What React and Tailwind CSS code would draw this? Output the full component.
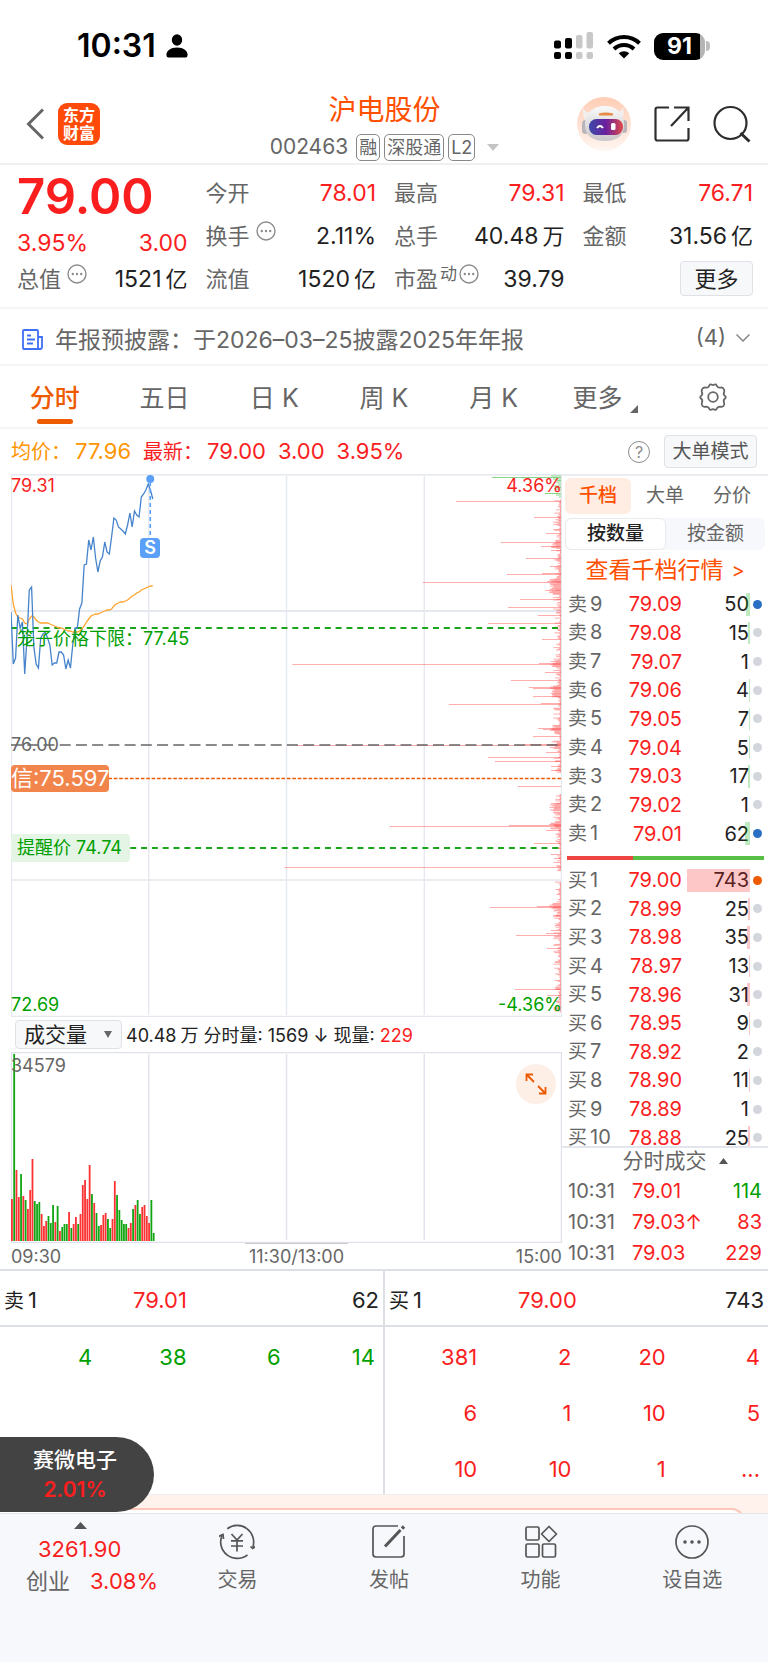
import { useState } from 'react'
import clsx from 'clsx'

const sells = [
  { name: '9', price: '79.09', qty: 50, bar: 4, dot: 'bg-[#2b6fc4]' },
  { name: '8', price: '79.08', qty: 15, bar: 2 },
  { name: '7', price: '79.07', qty: 1, bar: 0 },
  { name: '6', price: '79.06', qty: 4, bar: 1 },
  { name: '5', price: '79.05', qty: 7, bar: 1 },
  { name: '4', price: '79.04', qty: 5, bar: 1 },
  { name: '3', price: '79.03', qty: 17, bar: 2 },
  { name: '2', price: '79.02', qty: 1, bar: 0 },
  { name: '1', price: '79.01', qty: 62, bar: 5, dot: 'bg-[#2b6fc4]' },
]

const buys = [
  { name: '1', price: '79.00', qty: 743, bar: 63, dot: 'bg-[#ee5a00]' },
  { name: '2', price: '78.99', qty: 25, bar: 2 },
  { name: '3', price: '78.98', qty: 35, bar: 3 },
  { name: '4', price: '78.97', qty: 13, bar: 1 },
  { name: '5', price: '78.96', qty: 31, bar: 3 },
  { name: '6', price: '78.95', qty: 9, bar: 1 },
  { name: '7', price: '78.92', qty: 2, bar: 0 },
  { name: '8', price: '78.90', qty: 11, bar: 1 },
  { name: '9', price: '78.89', qty: 1, bar: 0 },
  { name: '10', price: '78.88', qty: 25, bar: 2 },
]

const deals = [
  { time: '10:31', price: '79.01', up: false, qty: 114, color: 'text-[#009f00]' },
  { time: '10:31', price: '79.03', up: true, qty: 83, color: 'text-[#fa1e1e]' },
  { time: '10:31', price: '79.03', up: false, qty: 229, color: 'text-[#fa1e1e]' },
]

// one value per minute, measured down from the top of the chart
const prices = [
  138, 190, 184, 141, 154, 148, 200, 164, 116, 113, 173, 190, 194, 164, 160, 158, 164, 171, 191, 189, 189,
  178, 178, 181, 195, 186, 194, 171, 154, 154, 135, 129, 91, 90, 66, 76, 63, 84, 98, 87, 83, 68,
  78, 80, 63, 44, 46, 53, 55, 57, 60, 51, 39, 53, 37, 41, 43, 23, 20, 16, 10, 16, 25,
]

const averages = [
  111, 130, 139, 143, 144, 145, 149, 150, 145, 142, 143, 146, 148, 149, 149, 149, 149, 150, 151, 152, 153,
  154, 154, 155, 156, 157, 157, 158, 158, 158, 157, 155, 152, 148, 145, 142, 141, 140, 140, 139, 138, 137,
  136, 136, 135, 132, 130, 129, 128, 128, 127, 126, 124, 122, 121, 119, 118, 116, 115, 114, 113, 112, 112,
]

const volumes =
  'r42 g187 r71 r44 g67 r45 g41 r32 r51 r82 g40 g37 g39 r27 r15 r20 g25 g18 g36 r19 g35 r10 g14 g17 g17 r29 g13 r17 r24 g17 r27 r56 r61 r42 r76 g47 r38 g28 g15 r16 r26 r28 g22 g13 r22 r60 g46 g31 g21 g17 g17 r13 r18 g32 r36 g41 g27 r34 r36 r25 r18 g41 g8'.split(' ')

// [y, length] of the big resting orders
const orders = [
  [28, 105], [44, 27], [60, 15], [69, 60], [73, 20], [77, 10], [85, 35], [93, 11], [101, 54], [100, 19], [109, 138],
  [108, 14], [117, 16], [126, 41], [134, 53], [142, 23], [150, 73], [166, 19], [191, 268], [190, 22], [199, 16],
  [207, 50], [214, 32], [215, 28], [223, 28], [231, 112], [230, 20], [255, 23], [256, 18], [263, 28], [272, 265],
  [271, 36], [279, 15], [284, 73], [288, 66], [293, 10], [297, 10], [313, 43], [330, 10], [353, 171],
  [352, 52], [351, 12], [357, 15], [370, 27], [381, 10], [385, 7], [394, 276], [434, 71], [433, 24], [442, 8],
  [457, 10], [460, 15], [462, 45], [475, 14], [516, 46], [522, 14],
]

const STEP = 550 / 241
const toPoints = (list) => list.map((y, i) => `${i * STEP},${y}`).join(' ')

// short bars between the big ones, denser around the busy prices
const busyPrices = [70, 109, 117, 190, 215, 219, 255, 271, 333, 351, 433]
const smallOrders = Array.from({ length: 625 }, (_, i) => {
  const y = 26 + i * 0.82
  const noise = Math.abs(Math.sin(i * 12.9898) * 43758.5453) % 1
  const busy = busyPrices.some((b) => Math.abs(b - y) < 4)
  return [y, busy ? 4 + noise * 8 : 1 + noise * noise * noise * 7]
}).filter(([y]) => !(y > 299 && y < 320) && !(y > 397 && y < 408))

function MoreDots() {
  return (
    <svg viewBox="0 0 20 20" className="size-5 shrink-0 text-[#8c8c8c]" fill="none" stroke="currentColor">
      <circle cx="10" cy="10" r="9" strokeWidth="1.4" />
      <g fill="currentColor" stroke="none">
        <circle cx="5.8" cy="10" r="1.2" />
        <circle cx="10" cy="10" r="1.2" />
        <circle cx="14.2" cy="10" r="1.2" />
      </g>
    </svg>
  )
}

function StatusBar() {
  return (
    <div className="flex h-[90px] items-center justify-between pt-0.5 pr-[58px] pl-[77px] text-black">
      <div className="flex items-center gap-2.5">
        <span className="text-[32px] leading-9 font-semibold">10:31</span>
        <svg viewBox="0 0 22 24" className="h-6 w-[22px]" fill="currentColor">
          <ellipse cx="11" cy="6" rx="5.2" ry="5.8" />
          <path d="M.4 21C.4 17 4.500 13.600 11 13.600S21.600 17 21.600 21Q21.600 23.500 19.500 23.500H2.500Q.4 23.500 .4 21Z" />
        </svg>
      </div>
      <div className="flex items-center">
        <svg viewBox="0 0 40 28" className="mr-3 h-7 w-10">
          <rect x="0" y="8.500" width="7" height="8" rx="2" />
          <rect x="11" y="6" width="7" height="10.500" rx="2" />
          <g fill="#c8c8c8">
            <rect x="22" y="3" width="6.500" height="13.500" rx="2" />
            <rect x="32.500" y="0" width="6.500" height="16.500" rx="2" />
            <rect x="22" y="20" width="6.500" height="7" rx="2" />
            <rect x="32.500" y="20" width="6.500" height="7" rx="2" />
          </g>
          <rect x="0" y="20" width="7" height="7" rx="2" />
          <rect x="11" y="20" width="7" height="7" rx="2" />
        </svg>
        <svg viewBox="0 0 36 26" className="mr-3 h-[26px] w-9" fill="none" stroke="currentColor" strokeWidth="4">
          <path d="M2.500 10.200A22.500 22.500 0 0 1 33.500 10.200" />
          <path d="M8 16A14.500 14.500 0 0 1 28 16" />
          <path d="M18 25.500L12.700 20.300A7.600 7.600 0 0 1 23.300 20.300Z" fill="currentColor" stroke="none" />
        </svg>
        <div className="flex items-center gap-px">
          <div className="flex h-[27px] w-[51px] justify-center rounded-[9px] bg-linear-to-r from-black from-90% to-[#b5b5b5] to-90% text-[23px] leading-[27px] font-bold text-white">
            91
          </div>
          <div className="h-2.5 w-1 rounded-r-full bg-[#bdbdbd]" />
        </div>
      </div>
    </div>
  )
}

function Robot() {
  return (
    <svg viewBox="0 0 54 54" className="size-[54px]">
      <defs>
        <linearGradient id="halo" x1="0" y1="0" x2="0" y2="1">
          <stop offset="0" stopColor="#ffcdb5" />
          <stop offset="1" stopColor="#fff6f1" />
        </linearGradient>
        <linearGradient id="shell" x1="0" y1="0" x2="0" y2="1">
          <stop offset="0" stopColor="#fafafa" />
          <stop offset="1" stopColor="#c9c5c8" />
        </linearGradient>
        <linearGradient id="visor" x1="0" y1="0" x2="1" y2="0">
          <stop offset="0" stopColor="#3b4aa8" />
          <stop offset=".5" stopColor="#6a1f9e" />
          <stop offset="1" stopColor="#e04a4a" />
        </linearGradient>
      </defs>
      <circle cx="27" cy="27" r="27" fill="url(#halo)" />
      <path d="M6 11q2 5 7 4l3 4-7 5q-4-6-3-13ZM46 10q-1 5-6 5l-2 4 6 5q4-6 2-14Z" fill="#f3efef" />
      <rect x="5" y="23" width="7" height="14" rx="3.500" fill="#b9b4ba" />
      <rect x="44" y="23" width="6" height="13" rx="3" fill="#b9b4ba" />
      <path d="M28 9C14 9 8 18 8 28c0 11 8 16 20 16s19-5 19-16C47 18 41 9 28 9Z" fill="url(#shell)" />
      <path d="M22 16.500q6-1.800 14 0v2H22Z" fill="#e88a45" />
      <rect x="12" y="22" width="34" height="16" rx="7.500" fill="url(#visor)" />
      <path d="M20 31q3-4 6 0" fill="none" stroke="#fff" strokeWidth="1.800" />
      <rect x="34" y="26" width="4.500" height="7" rx="1.500" fill="#fff" />
    </svg>
  )
}

function Header() {
  return (
    <header className="flex h-[75px] items-center justify-between border-b-2 border-[#f0f0f0] pr-[17px] pb-1.5 pl-[26px]">
      <div className="flex w-[168px] items-center gap-3.5">
        <button aria-label="返回">
          <svg viewBox="0 0 18 32" className="h-8 w-[18px]" fill="none" stroke="#666" strokeWidth="3">
            <path d="M17 1.500L2.500 16L17 30.500" />
          </svg>
        </button>
        <a
          href="#"
          className="flex size-[42px] flex-col items-center justify-center rounded-[9px] bg-[#ff4a0a] text-[16px] leading-[18px] font-bold text-white"
        >
          <span>东方</span>
          <span>财富</span>
        </a>
      </div>
      <div className="flex flex-col items-center gap-2 pt-[7px]">
        <h1 className="text-[28px] leading-8 text-[#ff5000]">沪电股份</h1>
        <div className="flex h-[27px] items-center gap-1 text-[18px] text-[#666]">
          <span className="mr-1 text-[21px]">002463</span>
          <span className="flex h-[27px] items-center rounded-[5px] border border-[#888] px-0.5">融</span>
          <span className="flex h-[27px] items-center rounded-[5px] border border-[#888] px-0.5">深股通</span>
          <span className="flex h-[27px] items-center rounded-[5px] border border-[#888] px-0.5">L2</span>
          <svg viewBox="0 0 12 7" className="ml-2 h-[7px] w-3" fill="#c4c4c4">
            <path d="M0 0H12L6 7Z" />
          </svg>
        </div>
      </div>
      <div className="flex w-[176px] items-center justify-end gap-[23px]">
        <Robot />
        <button aria-label="分享">
          <svg viewBox="0 0 36 36" className="size-9" fill="none" stroke="#2e2e2e" strokeWidth="2.200">
            <path d="M15 1.500H3.500Q1.500 1.500 1.500 3.500V32.500Q1.500 34.500 3.500 34.500H32.500Q34.500 34.500 34.500 32.500V22" />
            <path d="M20 1.500H34.500V15M34.500 1.500L17 20" />
          </svg>
        </button>
        <button aria-label="搜索">
          <svg viewBox="0 0 38 38" className="size-[38px]" fill="none" stroke="#2e2e2e" strokeWidth="2.200">
            <circle cx="17.500" cy="18" r="16" />
            <path d="M27.500 28L36.500 36.500" strokeWidth="3" />
          </svg>
        </button>
      </div>
    </header>
  )
}

function Stat({ label, value, unit, red, dots, sup }) {
  return (
    <div className="flex h-[43px] items-center justify-between">
      <dt className="flex items-center text-[22px] text-[#666]">
        {label}
        {sup && <sup className="top-0 mb-2.5 ml-0.5 text-[17px]">{sup}</sup>}
        {dots && <span className={clsx('mb-2.5', sup ? 'ml-0.5' : 'ml-1.5')}><MoreDots /></span>}
      </dt>
      <dd className={red ? 'text-[#fa1e1e]' : 'text-[#222]'}>
        {value}
        {unit && <span className="ml-1 text-[22px]">{unit}</span>}
      </dd>
    </div>
  )
}

function Quote() {
  return (
    <section className="grid h-36 grid-cols-4 gap-x-[18px] border-b-2 border-[#f5f5f5] pt-1.5 pr-[15px] pl-[17px] text-[23px] leading-7">
      <dl>
        <div className="h-[51px] text-[49px] leading-[51px] font-semibold text-[#fa1e1e]">79.00</div>
        <div className="flex h-[35px] items-end justify-between text-[#fa1e1e]">
          <span>3.95%</span>
          <span>3.00</span>
        </div>
        <Stat label="总值" value="1521" unit="亿" dots />
      </dl>
      <dl>
        <Stat label="今开" value="78.01" red />
        <Stat label="换手" value="2.11%" dots />
        <Stat label="流值" value="1520" unit="亿" />
      </dl>
      <dl>
        <Stat label="最高" value="79.31" red />
        <Stat label="总手" value="40.48" unit="万" />
        <Stat label="市盈" sup="动" value="39.79" dots />
      </dl>
      <div>
        <dl>
          <Stat label="最低" value="76.71" red />
          <Stat label="金额" value="31.56" unit="亿" />
        </dl>
        <div className="flex h-[43px] items-center justify-end">
          <button className="h-[35px] w-[73px] rounded-[4px] border border-[#dfe1e6] bg-[#f7f8fa] text-[22px] text-[#222]">
            更多
          </button>
        </div>
      </div>
    </section>
  )
}

function Notice() {
  return (
    <div className="flex h-[57px] items-center border-b-2 border-[#f5f5f5] pt-1.5 pr-[18px] pl-[22px] text-[23px] text-[#666]">
      <svg viewBox="0 0 21 21" className="mr-3 size-[21px]" fill="none" stroke="#3f6ff5" strokeWidth="1.800">
        <path d="M1 2Q1 1 2 1H15Q16 1 16 2V20H2Q1 20 1 19Z" />
        <path d="M16 8H20V18Q20 20 18 20H15M5 6.500H9M5 10.500H13M5 14.500H11" />
      </svg>
      <span className="flex-1 truncate pt-0.5">年报预披露：于2026–03–25披露2025年年报</span>
      <button className="flex items-center gap-2.5 pb-1 text-[22px]">
        (4)
        <svg viewBox="0 0 14 8" className="h-2 w-3.5" fill="none" stroke="#888" strokeWidth="1.500">
          <path d="M.5 .5L7 7L13.500 .5" />
        </svg>
      </button>
    </div>
  )
}

function PeriodTabs() {
  const [active, setActive] = useState('分时')
  const periods = ['分时', '五日', '日 K', '周 K', '月 K']

  return (
    <nav className="grid h-[63px] grid-cols-7 border-b-2 border-[#f5f5f5] text-[25px] text-[#666]">
      {periods.map((p) => (
        <button
          key={p}
          onClick={() => setActive(p)}
          className={clsx('relative pt-1', active === p && 'font-medium text-[#ee5a00]')}
        >
          {p}
          {active === p && (
            <span className="absolute bottom-[3px] left-1/2 h-[5px] w-9 -translate-x-1/2 rounded-full bg-[#ee5a00]" />
          )}
        </button>
      ))}
      <button className="flex items-center justify-center gap-2 pt-1 pl-1">
        更多
        <svg viewBox="0 0 8 8" className="mt-5 size-2" fill="#666">
          <path d="M8 0V8H0Z" />
        </svg>
      </button>
      <button aria-label="设置" className="flex items-center justify-center">
        <svg viewBox="0 0 30 30" className="size-[30px]" fill="none" stroke="#666" strokeWidth="1.800">
          <path
            d="M11.500 3.200Q12 1.800 13.500 2.600Q15 3.600 16.500 2.600Q18 1.800 18.500 3.200Q19.500 6 22.500 5.600Q25 5 26 7.500Q26.800 9 26 10.500Q25 12.500 27 14Q28.500 15 27 16.500Q25 18 26 20.500Q27 22.500 25.500 24Q24.500 25.200 22.500 24.600Q19.500 24.500 18.500 27Q18 28.500 16.500 27.600Q15 26.800 13.500 27.600Q12 28.500 11.500 27Q10.500 24.500 7.500 24.600Q5.500 25.200 4.500 24Q3 22.500 4 20.500Q5 18 3 16.500Q1.500 15 3 14Q5 12.500 4 10.500Q3.200 9 4 7.500Q5 5 7.500 5.600Q10.500 6 11.500 3.200Z"
            strokeLinejoin="round"
          />
          <circle cx="15" cy="15" r="4.800" />
        </svg>
      </button>
    </nav>
  )
}

function InfoBar() {
  return (
    <div className="flex h-[45px] items-center pr-[11px] pl-[11px] text-[22px] text-[#fa1e1e]">
      <span className="mr-3 flex items-center text-[#ff9500]">
        <span className="mr-1 text-[20px]">均价：</span>77.96
      </span>
      <span className="mr-3 flex items-center">
        <span className="mr-1 text-[20px]">最新：</span>79.00
      </span>
      <span className="mr-3">3.00</span>
      <span>3.95%</span>
      <button aria-label="说明" className="mr-3.5 ml-auto flex size-[22px] items-center justify-center rounded-full border border-[#8c8c8c] text-[16px] leading-none text-[#8c8c8c]">
        ?
      </button>
      <button className="h-[33px] w-[93px] rounded-[4px] border border-[#dfe1e6] bg-[#f7f8fa] text-[19px] leading-7 text-[#555]">
        大单模式
      </button>
    </div>
  )
}

function PriceChart() {
  return (
    <div className="relative h-[543px] text-[18px] leading-5">
      <svg viewBox="0 0 550 543" preserveAspectRatio="none" className="size-full">
        <g stroke="#e6e8f0" strokeWidth="1.400">
          <path d="M0 .7H550M0 542.500H550M.5 0V543M137.500 2V541M275 2V541M412.500 2V541M549.500 0V543M0 406H550" />
          <path d="M0 137H550" strokeWidth="2" />
        </g>
        <g stroke="#ff3b3b" strokeOpacity=".42" strokeWidth="1">
          {orders.map(([y, len]) => (
            <path key={`${y}-${len}`} d={`M${549 - len} ${y - 0.5}H549`} />
          ))}
          {smallOrders.map(([y, len]) => (
            <path key={y} d={`M${549 - len} ${y}H549`} />
          ))}
        </g>
        <g stroke="#39b939" strokeOpacity=".6" strokeWidth="1.200">
          <path d="M480 3.500H549M539 2H549M541 5H549M545 6.500H549M543 8H549M546 10H549M541 12H549M544 13.500H549M542 15H549M546 17H549M533 19.500H549M544 21H549M547 23H549" />
        </g>
        <g strokeWidth="2" fill="none">
          <path d="M0 154H549" stroke="#1ba51b" strokeDasharray="6 4.800" />
          <path d="M0 271H549" stroke="#666" strokeWidth="1.500" strokeDasharray="11 5.200" />
          <path d="M0 304.500H549" stroke="#ee5a00" strokeWidth="1.500" strokeDasharray="3.600 1.800" />
          <path d="M119 374H549" stroke="#1ba51b" strokeDasharray="6 4.800" />
        </g>
        <polyline points={toPoints(averages)} fill="none" stroke="#ffa42e" strokeWidth="1.300" />
        <polyline points={toPoints(prices)} fill="none" stroke="#4583cb" strokeWidth="1.300" />
        <path d="M139 8V64" stroke="#5a9ff8" strokeWidth="1.600" strokeDasharray="4 3" />
        <circle cx="139" cy="5" r="4" fill="#5a9ff8" />
      </svg>
      <span className="absolute top-0.5 left-0 text-[#fa1e1e]">79.31</span>
      <span className="absolute top-0.5 right-0 text-[#fa1e1e]">4.36%</span>
      <span className="absolute top-16 left-[129px] size-5 rounded-[4px] bg-[#5a9ff8] text-center font-semibold text-white">
        S
      </span>
      <span className="absolute top-[155px] left-1.5 text-[#009f00]">笼子价格下限：77.45</span>
      <span className="absolute top-[261px] left-0 text-[#666]">76.00</span>
      <span className="absolute top-[291px] left-0 rounded-[4px] bg-[#f2854c] text-[22px] leading-[27px] text-white">
        信:75.597
      </span>
      <span className="absolute top-[360px] left-0 rounded-r-[4px] bg-[#e5f5e5] pr-2 pl-1.5 leading-7 text-[#009f00]">
        提醒价 74.74
      </span>
      <span className="absolute bottom-0.5 left-0 text-[#009f00]">72.69</span>
      <span className="absolute right-0 bottom-0.5 text-[#009f00]">-4.36%</span>
    </div>
  )
}

function VolumeChart() {
  return (
    <>
      <div className="flex h-[35px] items-center gap-1 pl-1 text-[18px] text-[#222]">
        <div className="relative">
          <select
            aria-label="指标"
            className="h-[29px] w-[107px] appearance-none rounded-[4px] border border-[#dfe1e6] bg-[#f7f8fa] pl-2 text-[21px] leading-6"
          >
            <option>成交量</option>
          </select>
          <svg viewBox="0 0 8 7" className="pointer-events-none absolute top-[11px] right-2.5 h-[7px] w-2" fill="#666">
            <path d="M0 0H8L4 7Z" />
          </svg>
        </div>
        <span className="pt-0.5 whitespace-nowrap">
          40.48<span className="ml-1">万</span> 分时量: 1569 ↓ 现量: <span className="text-[#fa1e1e]">229</span>
        </span>
      </div>
      <div className="relative h-[191px]">
        <svg viewBox="0 0 550 191" preserveAspectRatio="none" className="size-full">
          <path d="M0 .5H550M0 190.500H550M.5 0V191M137.500 2V188M275 2V188M412.500 2V188M549.500 0V191" stroke="#dfe2ea" strokeWidth="1.400" />
          {volumes.map((v, i) => {
            const h = Number(v.slice(1))
            return (
              <rect
                key={i}
                x={i * STEP}
                y={189 - h}
                width="1.800"
                height={h}
                fill={v[0] === 'r' ? '#fa3232' : '#12a512'}
              />
            )
          })}
        </svg>
        <span className="absolute top-1 left-0 text-[18px] leading-5 text-[#666]">34579</span>
        <button
          aria-label="全屏"
          className="absolute top-3 right-1.5 flex size-10 items-center justify-center rounded-full bg-[#fdeee6]"
        >
          <svg viewBox="0 0 22 22" className="size-[22px]" fill="none" stroke="#ee5a00" strokeWidth="1.800">
            <path d="M1.500 8V1.500H8M1.500 1.500L9 9M20.500 14V20.500H14M20.500 20.500L13 13" />
          </svg>
        </button>
      </div>
      <div className="flex h-[26px] justify-between text-[18px] leading-[26px] text-[#666]">
        <span className="pt-px">09:30</span>
        <span className="ml-4 border-t border-[#c9c9c9] px-1">11:30/13:00</span>
        <span className="pt-px">15:00</span>
      </div>
    </>
  )
}

function BookTable({ side, rows, barColor, className }) {
  return (
    <table className={clsx('w-full table-fixed text-[20px] leading-4', className)}>
      <tbody>
        {rows.map((row) => (
          <tr key={row.name}>
            <th scope="row" className="w-[51px] p-0 pl-1.5 text-left font-normal whitespace-nowrap text-[#666]">
              <span className="text-[19px]">{side}</span>
              <span className="ml-[3px]">{row.name}</span>
            </th>
            <td className="w-[69px] p-0 text-right text-[#fa1e1e]">{row.price}</td>
            <td className="relative p-0 pr-px text-right text-[#222]">
              {row.qty}
              <span className={clsx('absolute inset-y-[3px] right-0', barColor)} style={{ width: row.bar }} />
            </td>
            <td className="w-[18px] p-0 pl-[3px]">
              <span className={clsx('block size-[9px] rounded-full', row.dot || 'bg-[#d3d6dd]')} />
            </td>
          </tr>
        ))}
      </tbody>
    </table>
  )
}

function OrderBook() {
  const [tab, setTab] = useState('千档')
  const [mode, setMode] = useState('按数量')

  return (
    <aside className="flex w-[206px] shrink-0 flex-col border-t-2 border-[#ececf0] text-[19px] leading-6">
      <div className="flex gap-px px-[3px] pt-0.5">
        {['千档', '大单', '分价'].map((t) => (
          <button
            key={t}
            onClick={() => setTab(t)}
            className={clsx(
              'h-9 flex-1 rounded-[6px]',
              tab === t ? 'bg-[#ffede4] font-medium text-[#ff5000]' : 'text-[#666]',
            )}
          >
            {t}
          </button>
        ))}
      </div>
      <div className="mx-[3px] mt-1 flex rounded-[6px] bg-[#f7f8fb]">
        {['按数量', '按金额'].map((m) => (
          <button
            key={m}
            onClick={() => setMode(m)}
            className={clsx(
              'h-8 flex-1 rounded-[6px]',
              mode === m ? 'border border-[#e8eaee] bg-white font-medium text-[#222]' : 'text-[#666]',
            )}
          >
            {m}
          </button>
        ))}
      </div>
      <a href="#" className="flex h-10 items-center justify-center gap-2 text-[23px] text-[#ff5000]">
        查看千档行情 <span className="text-[20px]">&gt;</span>
      </a>
      <BookTable side="卖" rows={sells} barColor="bg-[#00aa00]/25" className="h-[258px]" />
      <div className="mr-1 ml-[5px] mt-2 mb-1.5 flex h-1">
        <div className="w-1/3 bg-[#ee4444]" />
        <div className="flex-1 bg-[#57bf45]" />
      </div>
      <div className="h-[280px]">
        <BookTable side="买" rows={buys} barColor="bg-[#fa1e1e]/25" className="h-[286px]" />
      </div>
      <button className="relative flex h-[29px] items-center justify-center gap-3 border-t-2 border-[#e3e5ec] bg-white pb-0.5 pl-5 text-[21px] text-[#666]">
        分时成交
        <svg viewBox="0 0 9 6" className="h-1.5 w-[9px]" fill="#555">
          <path d="M0 6H9L4.500 0Z" />
        </svg>
      </button>
      <table className="h-[94px] w-full table-fixed text-[20px]">
        <tbody>
          {deals.map((d, i) => (
            <tr key={i}>
              <td className="w-[60px] p-0 pl-1.5 text-[#666]">{d.time}</td>
              <td className="w-[88px] p-0 pl-[10px] text-[#fa1e1e]">
                {d.price}
                {d.up && '↑'}
              </td>
              <td className={clsx('p-0 pr-1.5 text-right', d.color)}>{d.qty}</td>
            </tr>
          ))}
        </tbody>
      </table>
    </aside>
  )
}

function Queue({ side, price, qty, rows, color }) {
  return (
    <div className="flex-1 text-[22px]">
      <div className="grid h-[56px] grid-cols-3 items-center border-b-2 border-[#dcdfe6] px-1 pt-1 text-[#222]">
        <span><span className="text-[20px]">{side}</span><span className="ml-1">1</span></span>
        <span className="pl-1 text-[#fa1e1e]">{price}</span>
        <span className="text-right">{qty}</span>
      </div>
      <div className="pt-0.5 pl-1.5">
        <table className={clsx('w-full table-fixed', color)}>
          <tbody>
            {rows.map((row, i) => (
              <tr key={i}>
                {row.map((n, j) => (
                  <td key={j} className="h-[56px] p-0 pr-2 text-right">{n}</td>
                ))}
              </tr>
            ))}
          </tbody>
        </table>
      </div>
    </div>
  )
}

function Queues() {
  return (
    <section className="flex h-[225px] border-t-2 border-[#dcdfe6]">
      <Queue side="卖" price="79.01" qty="62" color="text-[#009f00]" rows={[['4', '38', '6', '14']]} />
      <div className="w-0.5 bg-[#dcdfe6]" />
      <Queue
        side="买"
        price="79.00"
        qty="743"
        color="text-[#fa1e1e]"
        rows={[['381', '2', '20', '4'], ['6', '1', '10', '5'], ['10', '10', '1', '...']]}
      />
    </section>
  )
}

function FloatingStock() {
  return (
    <button className="absolute bottom-px left-0 flex h-[75px] w-[154px] flex-col items-center justify-center gap-0.5 rounded-r-full bg-[#434343] pr-1 text-[21px] leading-7 font-medium text-white">
      赛微电子
      <span className="font-semibold text-[#fa1e1e]">2.01%</span>
    </button>
  )
}

function NavItem({ label, children }) {
  return (
    <button className="flex flex-col items-center gap-2 pt-2.5">
      <svg viewBox="0 0 36 36" className="size-9" fill="none" stroke="#555" strokeWidth="1.700">
        {children}
      </svg>
      <span className="text-[20px] leading-6">{label}</span>
    </button>
  )
}

function BottomNav() {
  return (
    <nav className="grid h-[149px] grid-cols-5 items-start border-t border-[#e4e6ea] bg-[#f7f8fb] pl-2.5 text-[#666]">
      <button className="flex flex-col items-start pt-2 pl-4 whitespace-nowrap">
        <svg viewBox="0 0 13 7" className="ml-12 h-[7px] w-[13px]" fill="#555">
          <path d="M0 7H13L6.500 0Z" />
        </svg>
        <span className="mt-1 ml-3 text-[22px] leading-8 text-[#fa1e1e]">3261.90</span>
        <span className="flex items-center gap-5 text-[22px] leading-8">
          创业 <span className="text-[#fa1e1e]">3.08%</span>
        </span>
      </button>
      <NavItem label="交易">
        <path d="M8.300 4.700A16.500 16.500 0 0 1 33.800 23.200M28.500 30.800A16.500 16.500 0 0 1 3.200 11" />
        <path d="M-.5 12.500L4 10.500L4.500 15M36.500 22.500L33.600 24.500L31.500 22.500" />
        <path d="M12.500 10L18 16L23.500 10M18 16V27.500M12 16.800H24M12 22H24" />
      </NavItem>
      <NavItem label="发帖">
        <path d="M27 2H5Q2 2 2 5V30Q2 33 5 33H30Q33 33 33 30V12" />
        <path d="M14 22.500L29.500 6" strokeWidth="3" />
        <path d="M31 4.500L33 2.500" strokeWidth="3.400" />
      </NavItem>
      <NavItem label="功能">
        <rect x="3" y="3" width="13" height="13" rx="1.500" />
        <rect x="3" y="20" width="13" height="13" rx="1.500" />
        <rect x="19.500" y="20" width="13" height="13" rx="1.500" />
        <path d="M26 2.500L33.500 10L26 17.500L18.500 10Z" strokeLinejoin="round" />
      </NavItem>
      <NavItem label="设自选">
        <circle cx="18" cy="18" r="16" />
        <g fill="#555" stroke="none">
          <circle cx="11" cy="18" r="1.800" />
          <circle cx="18" cy="18" r="1.800" />
          <circle cx="25" cy="18" r="1.800" />
        </g>
      </NavItem>
    </nav>
  )
}

export default function App() {
  return (
    <div className="bg-white font-['Inter','Noto_Sans_CJK_SC',sans-serif] text-[#222]">
      <StatusBar />
      <Header />
      <Quote />
      <Notice />
      <PeriodTabs />
      <InfoBar />
      <main className="flex">
        <div className="min-w-0 flex-1 pl-[11px]">
          <PriceChart />
          <VolumeChart />
        </div>
        <OrderBook />
      </main>
      <div className="relative">
        <Queues />
        <div className="h-[19px] overflow-hidden border-t border-[#eceef2] bg-[#fff2ed] pt-[13px] pr-6">
          <div className="h-5 rounded-tr-[12px] border-t-2 border-r-2 border-[#ffc5b8] bg-white" />
        </div>
        <FloatingStock />
      </div>
      <BottomNav />
    </div>
  )
}
